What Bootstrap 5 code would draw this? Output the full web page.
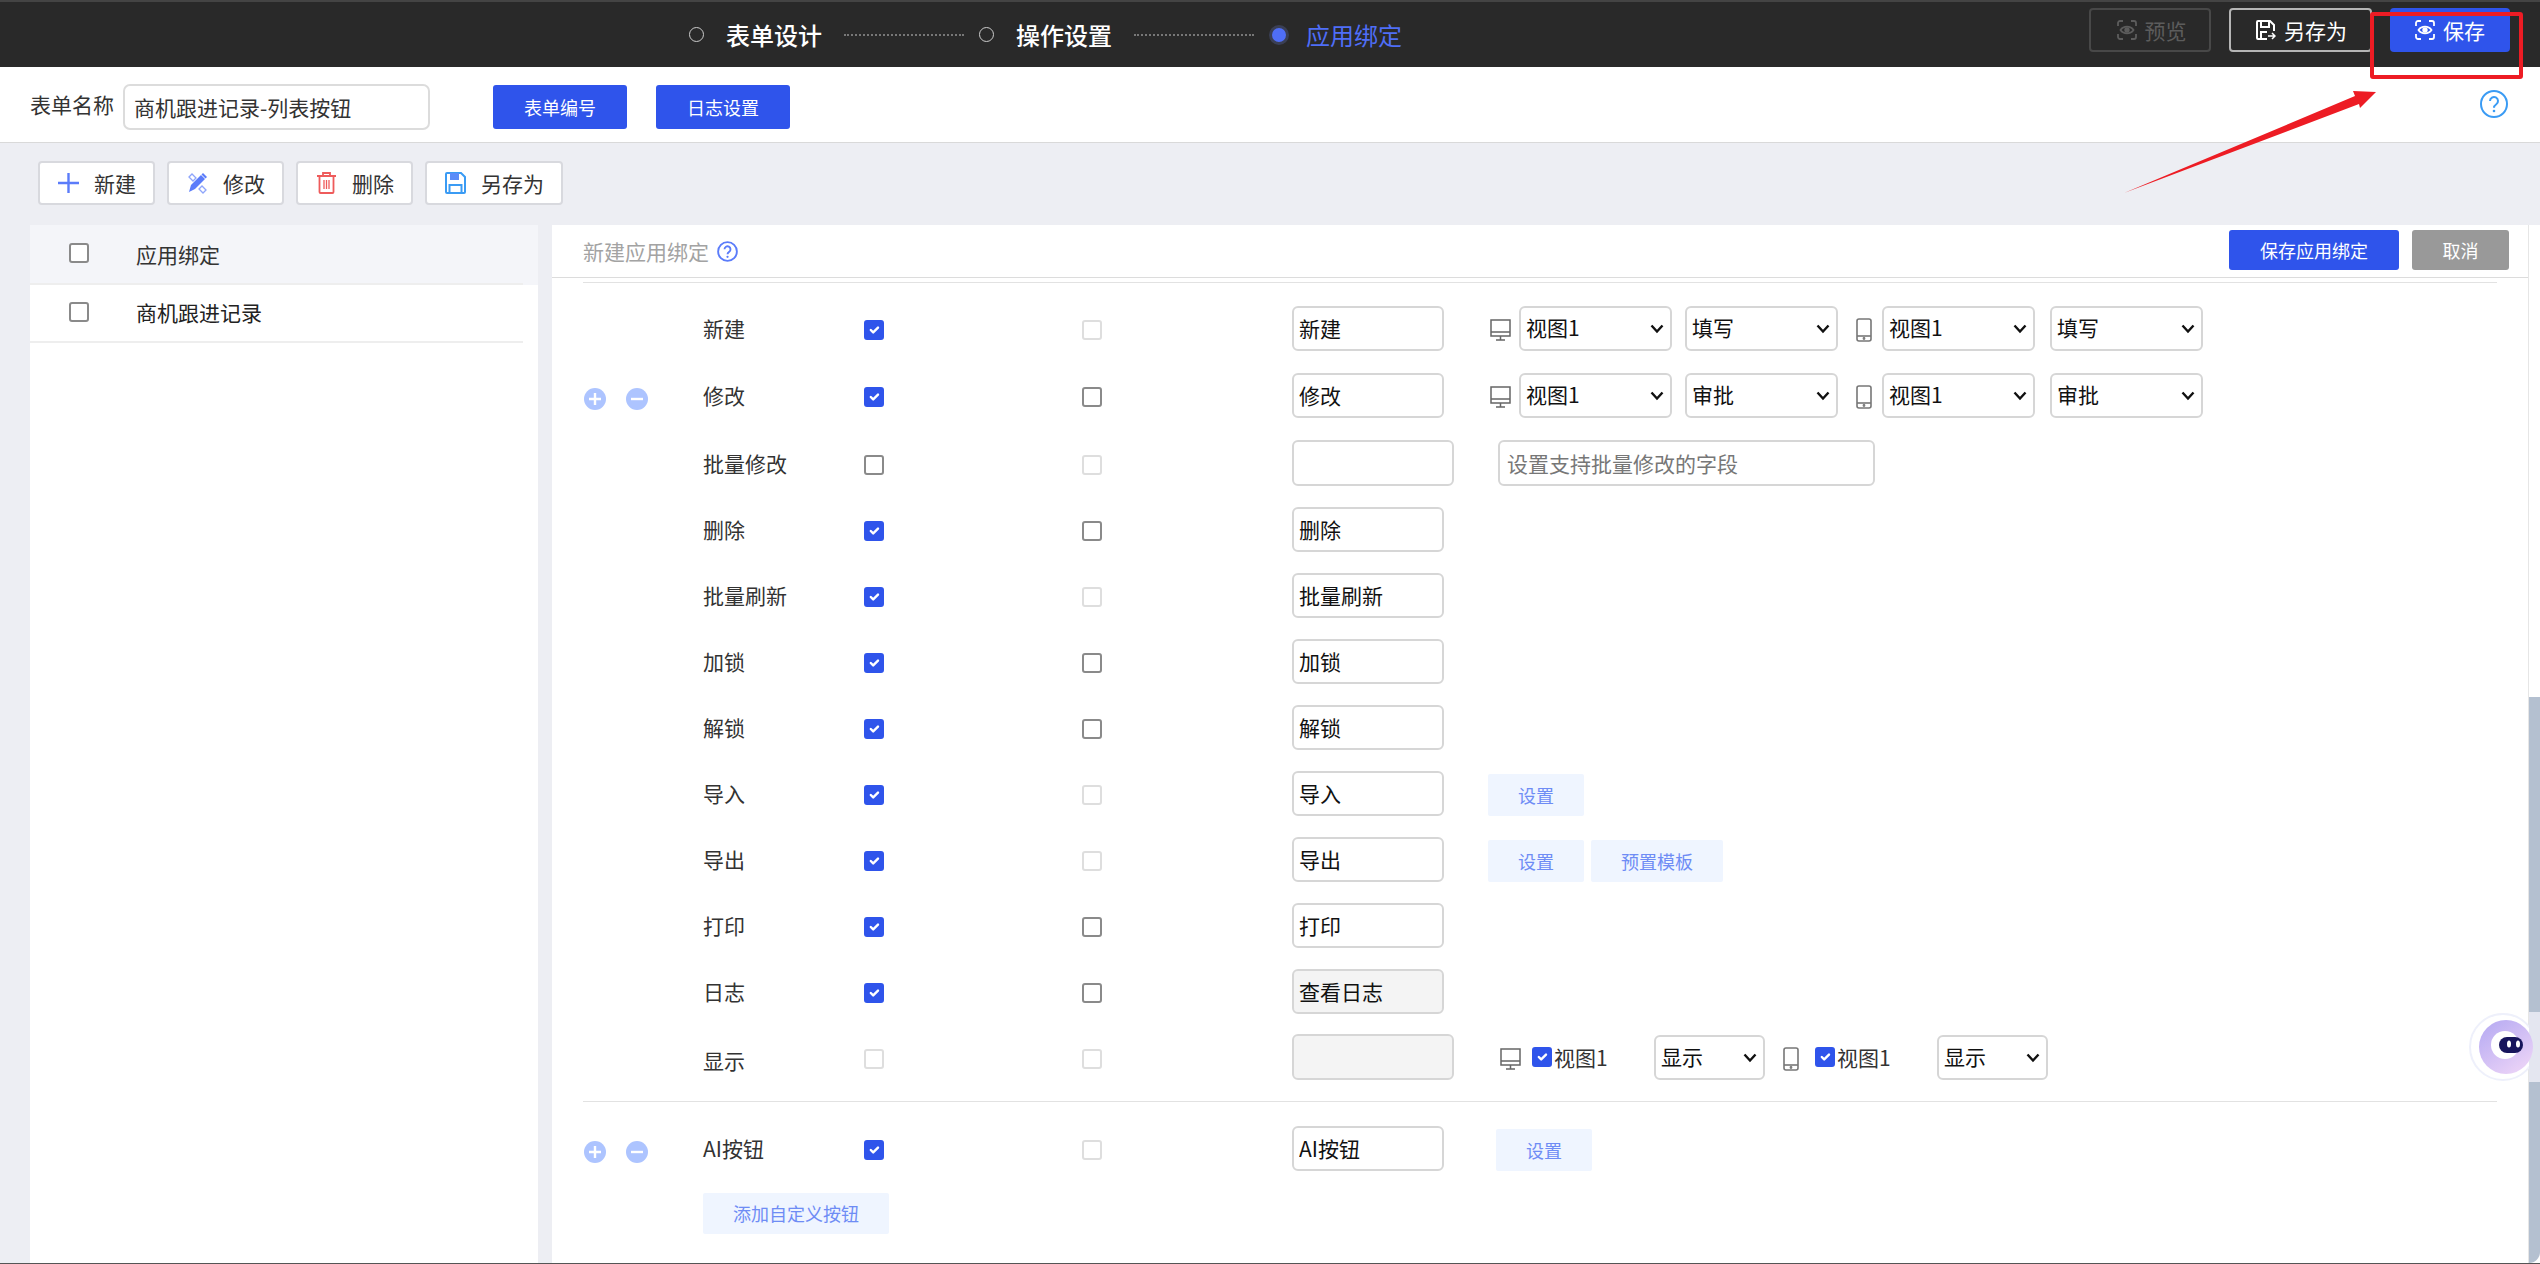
<!DOCTYPE html>
<html lang="zh-CN">

<head>
  <meta charset="utf-8">
  <title>应用绑定</title>
  <link href="https://cdn.jsdelivr.net/npm/bootstrap@5.3.0/dist/css/bootstrap.min.css" rel="stylesheet">

  <style>
    body {
      font-family: "Noto Sans CJK SC", "Noto Sans", sans-serif;
      font-size: 21px;
      color: #333;
      height: 1264px;
      overflow: hidden;
      background-color: #edeef3;
      position: relative;
    }

    /* top dark bar */
    .top-bar {
      height: 67px;
      background-color: #292929;
      border-top: 2px solid #444;
      padding-left: 689px;
      padding-right: 30px;
    }

    .step-ring {
      width: 15px;
      height: 15px;
      border: 1.5px solid #ccc;
      border-radius: 50%;
    }

    .step-now {
      width: 20px;
      height: 20px;
      background-color: #4f6ef7;
      border: 3px solid #3a3f55;
      border-radius: 50%;
    }

    .step-text {
      font-size: 24px;
      font-weight: 500;
      color: #fff;
      margin-left: 22px;
      line-height: 1;
    }

    .step-text.on {
      color: #4f6ef7;
      margin-left: 17px;
      font-weight: 400;
    }

    .step-dots {
      width: 120px;
      margin: 0 15px 0 22px;
      border-top: 2px dotted #777;
    }

    .dark-btn {
      height: 44px;
      font-size: 21px;
      padding: 0;
      border-radius: 4px;
      gap: 8px;
      margin-top: -9px;
      line-height: 1;
    }

    .dark-preview {
      width: 122px;
      color: #5c5c5c;
      border: 2px solid #484848;
      margin-right: 18px;
      padding-left: 3px;
    }

    .dark-saveas {
      width: 143px;
      color: #fff;
      border: 2px solid #b5b5b5;
      margin-right: 18px;
      padding-left: 2px;
    }

    .dark-save {
      width: 120px;
      color: #fff;
      background-color: #2f54eb;
      border: 0;
    }

    /* form name bar */
    .name-bar {
      height: 76px;
      background-color: #fff;
      border-bottom: 1px solid #d9d9d9;
      padding: 5px 32px 0 30px;
    }

    .name-label {
      width: 93px;
      margin-top: -5px;
      line-height: 1;
    }

    .name-input.form-control {
      width: 307px;
      height: 46px;
      padding: 0 9px;
      font-size: 21px;
      color: #333;
      border: 2px solid #dcdcdc;
      border-radius: 7px;
    }

    .name-help {
      margin-top: -6px;
    }

    .blue-btn {
      height: 44px;
      width: 134px;
      padding: 0;
      font-size: 18px;
      color: #fff;
      background-color: #2f54eb;
      border: 0;
      border-radius: 3px;
    }

    .gap-left-63 { margin-left: 63px; }
    .gap-left-29 { margin-left: 29px; }
    .gap-left-44 { margin-left: 44px; }
    .gap-left-52 { margin-left: 52px; }

    /* toolbar */
    .tool-bar {
      height: 82px;
      padding: 18px 0 0 38px;
      gap: 12px;
    }

    .tool-btn {
      height: 44px;
      padding: 0 17px 0 18px;
      gap: 15px;
      font-size: 21px;
      color: #333;
      background-color: #fff;
      border: 2px solid #d8d9de;
      border-radius: 4px;
      line-height: 1;
    }

    .tool-icon {
      width: 21px;
      height: 22px;
      flex: none;
    }

    /* main area */
    .main-area {
      height: 1039px;
      padding-left: 30px;
      border-bottom: 1px solid #555;
    }

    .left-panel {
      width: 508px;
      background-color: #fff;
      margin-right: 14px;
    }

    .left-head {
      height: 60px;
      background-color: #f4f5f9;
      padding-left: 39px;
    }

    .left-row {
      height: 60px;
      margin-right: 15px;
      border-top: 2px solid #eee;
      border-bottom: 2px solid #eee;
      padding-left: 39px;
      margin-top: -2px;
      position: relative;
      color: #222;
    }

    .left-text {
      margin-left: 47px;
      margin-top: -1px;
      line-height: 1;
    }

    .right-panel {
      width: 1976px;
      background-color: #fff;
    }

    .right-head {
      height: 53px;
      border-bottom: 1px solid #dcdcdc;
      padding-left: 31px;
      padding-right: 19px;
    }

    .right-title {
      color: #a3a3a3;
      line-height: 1;
    }

    .bind-save {
      width: 170px;
      height: 40px;
      margin-right: 13px;
      margin-top: -2px;
    }

    .bind-cancel {
      width: 97px;
      height: 40px;
      margin-top: -2px;
      padding: 0;
      font-size: 18px;
      color: #fff;
      background-color: #999;
      border: 0;
      border-radius: 3px;
    }

    .thin-rule {
      height: 1px;
      margin: 4px 31px 12px;
      background-color: #e2e2e2;
    }

    /* rows of the binding form */
    .bind-line {
      height: 66px;
    }

    .line-second {
      margin-top: 1px;
    }

    .line-third {
      margin-top: 2px;
    }

    .cell-handle {
      width: 151px;
      padding-left: 32px;
      gap: 20px;
      margin-top: 7px;
    }

    .cell-name {
      width: 161px;
      line-height: 1;
    }

    .cell-name.low {
      padding-top: 7px;
    }

    .cell-check {
      width: 218px;
    }

    .cell-check.two {
      width: 210px;
    }

    .round-icon {
      width: 22px;
      height: 22px;
      flex: none;
    }

    .form-check-input.list-check {
      width: 20px;
      height: 20px;
      margin: 0;
      flex: none;
      border: 2px solid #8a8a8a;
      border-radius: 3px;
      box-shadow: none;
    }

    .form-check-input.list-check:checked {
      background-color: #2f54eb;
      border-color: #2f54eb;
    }

    .form-check-input.list-check:disabled {
      opacity: 1;
      background-color: #fff;
      border-color: #dedede;
    }

    .left-head .form-check-input.list-check {
      margin-top: -4px;
    }

    .left-row .form-check-input.list-check {
      margin-top: -3px;
    }

    .cell-check .form-check-input.list-check {
      margin-top: 3px;
    }

    .form-check-input.list-check.after-screen {
      margin-left: 11px;
    }

    .form-check-input.list-check.after-phone {
      margin-left: 16px;
    }

    .text-field.form-control {
      width: 152px;
      height: 45px;
      padding: 0 5px;
      font-size: 21px;
      color: #111;
      border: 2px solid #d6d6d6;
      border-radius: 6px;
      flex: none;
    }

    .text-field.wide {
      width: 162px;
      height: 46px;
    }

    .text-field.grey {
      background-color: #f4f4f4;
    }

    .field-batch.form-control {
      width: 377px;
      height: 46px;
      margin-left: 44px;
      padding: 0 7px;
      font-size: 21px;
      border: 2px solid #d6d6d6;
      border-radius: 6px;
    }

    .field-batch.form-control::placeholder {
      color: #777;
    }

    .view-select.form-select {
      width: 153px;
      height: 45px;
      flex: none;
      padding: 0 24px 0 5px;
      font-size: 21px;
      color: #111;
      border: 2px solid #d6d6d6;
      border-radius: 6px;
      background-image: url("data:image/svg+xml,%3csvg xmlns='http://www.w3.org/2000/svg' viewBox='0 0 14 10'%3e%3cpath fill='none' stroke='%23111' stroke-width='2.4' d='M1.500 1.500L7 7.500l5.500-6'/%3e%3c/svg%3e");
      background-position: right 6px top 16px;
      background-size: 14px 10px;
      box-shadow: none;
    }

    .view-select.short {
      width: 111px;
    }

    .ms-8 { margin-left: 8px; }
    .ms-10 { margin-left: 10px; }
    .ms-13 { margin-left: 13px; }
    .ms-15 { margin-left: 15px; }
    .ms-18 { margin-left: 18px; }

    .screen-icon {
      width: 21px;
      height: 22px;
      flex: none;
      margin-left: 46px;
      margin-top: 3px;
    }

    .phone-icon {
      width: 16px;
      height: 24px;
      flex: none;
      margin-top: 3px;
    }

    .view-name {
      width: 100px;
      margin-left: 2px;
      font-size: 21px;
      line-height: 1;
    }

    .pale-btn {
      height: 42px;
      width: 96px;
      padding: 0;
      font-size: 18px;
      color: #6e8cf5;
      background-color: #eff5ff;
      border: 0;
      border-radius: 2px;
      margin-top: 4px;
      flex: none;
    }

    .pale-btn.tpl {
      width: 132px;
      margin-left: 7px;
    }

    .pale-btn.add {
      width: 186px;
      height: 41px;
      margin: 12px 0 0 151px;
    }

    .form-rule {
      height: 1px;
      margin: 11px 31px 13px;
      background-color: #e2e2e2;
    }

    .scroll-rail {
      width: 12px;
      background-color: #fff;
      border-left: 1px solid #e6e6e6;
      padding-top: 472px;
    }

    .scroll-thumb {
      height: 100%;
      background-color: #b4c0d0;
      border-bottom-right-radius: 12px;
    }

    /* hand drawn marks on the screenshot */
    .mark-layer {
      position: absolute;
      left: 0;
      top: 0;
      pointer-events: none;
    }
  </style>
</head>

<body>
  <header class="top-bar d-flex align-items-center">
    <span class="step-ring"></span>
    <span class="step-text">表单设计</span>
    <span class="step-dots"></span>
    <span class="step-ring"></span>
    <span class="step-text">操作设置</span>
    <span class="step-dots"></span>
    <span class="step-now"></span>
    <span class="step-text on">应用绑定</span>

    <button class="btn dark-btn dark-preview d-inline-flex align-items-center justify-content-center ms-auto" type="button">
      <svg width="20" height="20" viewBox="0 0 20 20" fill="none" stroke="#5c5c5c" stroke-width="1.8"><path d="M1 6V3a2 2 0 0 1 2-2h3M14 1h3a2 2 0 0 1 2 2v3M19 14v3a2 2 0 0 1-2 2h-3M6 19H3a2 2 0 0 1-2-2v-3"/><path d="M3.5 10c3-4.500 10-4.500 13 0-3 4.500-10 4.500-13 0z"/><circle cx="10" cy="10" r="1.800" fill="#5c5c5c"/></svg>
      预览
    </button>
    <button class="btn dark-btn dark-saveas d-inline-flex align-items-center justify-content-center" type="button">
      <svg width="20" height="20" viewBox="0 0 20 20" fill="none" stroke="#fff" stroke-width="2"><path d="M11 19H2a1 1 0 0 1-1-1V2a1 1 0 0 1 1-1h12l4 4v6"/><path d="M5 1v6h8V1M5 19v-7h6"/><path d="M12 16h7M16 13l3 3-3 3" stroke-width="1.500"/></svg>
      另存为
    </button>
    <button class="btn dark-btn dark-save d-inline-flex align-items-center justify-content-center" type="button">
      <svg width="20" height="20" viewBox="0 0 20 20" fill="none" stroke="#fff" stroke-width="1.800"><path d="M1 6V3a2 2 0 0 1 2-2h3M14 1h3a2 2 0 0 1 2 2v3M19 14v3a2 2 0 0 1-2 2h-3M6 19H3a2 2 0 0 1-2-2v-3"/><path d="M3.500 10c3-4.500 10-4.500 13 0-3 4.500-10 4.500-13 0z"/><circle cx="10" cy="10" r="1.800" fill="#fff"/></svg>
      保存
    </button>
  </header>

  <div class="name-bar d-flex align-items-center">
    <span class="name-label">表单名称</span>
    <input class="form-control name-input" type="text" value="商机跟进记录-列表按钮">
    <button class="btn blue-btn gap-left-63" type="button">表单编号</button>
    <button class="btn blue-btn gap-left-29" type="button">日志设置</button>
    <svg class="name-help ms-auto" width="28" height="28" viewBox="0 0 28 28" fill="none">
      <circle cx="14" cy="14" r="13" stroke="#3a9bf4" stroke-width="2"/>
      <path d="M10 11a4 4 0 1 1 6.300 3.300c-1.400 1-2.300 1.700-2.300 3.400" stroke="#3a9bf4" stroke-width="2"/>
      <circle cx="14" cy="21" r="1.300" fill="#3a9bf4"/>
    </svg>
  </div>

  <div class="tool-bar d-flex align-items-start">
    <button class="btn tool-btn d-inline-flex align-items-center" type="button">
      <svg class="tool-icon" viewBox="0 0 21 22"><path d="M10.500 1v20M0 11h21" stroke="#5b7cfa" stroke-width="2.400"/></svg>
      新建
    </button>
    <button class="btn tool-btn d-inline-flex align-items-center" type="button">
      <svg class="tool-icon" viewBox="0 0 21 22" fill="none">
        <path d="M2 20l2-7L14 3l4 4L8 17z" fill="#5b7cfa"/>
        <path d="M16 1l4 4-1.500 1.500-4-4z" fill="#5b7cfa"/>
        <path d="M2 5l3-3 4 4-3 3zM12 17l3-3 4 4-3 3z" stroke="#8ea5fb" stroke-width="1.300"/>
      </svg>
      修改
    </button>
    <button class="btn tool-btn d-inline-flex align-items-center" type="button">
      <svg class="tool-icon" viewBox="0 0 21 22" fill="none" stroke="#ee5b5b" stroke-width="1.800">
        <path d="M1 4h19M7 4V1h7v3"/>
        <path d="M3.500 4v16a1 1 0 0 0 1 1h12a1 1 0 0 0 1-1V4"/>
        <path d="M8 8v9M10.500 8v9M13 8v9" stroke-width="1.300"/>
      </svg>
      删除
    </button>
    <button class="btn tool-btn d-inline-flex align-items-center" type="button">
      <svg class="tool-icon" viewBox="0 0 21 22" fill="none" stroke="#3a9bf4" stroke-width="2">
        <path d="M2 1h14l4 4v15a1 1 0 0 1-1 1H2a1 1 0 0 1-1-1V2a1 1 0 0 1 1-1z"/>
        <path d="M5 1h9v7H5z" fill="#5b8cf8" stroke="none"/>
        <path d="M4.500 21v-8h12v8"/>
      </svg>
      另存为
    </button>
  </div>

  <div class="main-area d-flex">
    <aside class="left-panel">
      <div class="left-head d-flex align-items-center">
        <input class="form-check-input list-check" type="checkbox">
        <span class="left-text">应用绑定</span>
      </div>
      <div class="left-row d-flex align-items-center">
        <input class="form-check-input list-check" type="checkbox">
        <span class="left-text">商机跟进记录</span>
      </div>
    </aside>

    <section class="right-panel">
      <div class="right-head d-flex align-items-center">
        <span class="right-title">新建应用绑定</span>
        <svg class="ms-2" width="21" height="21" viewBox="0 0 28 28" fill="none">
          <circle cx="14" cy="14" r="12.500" stroke="#5b7cfa" stroke-width="2.500"/>
          <path d="M10 11a4 4 0 1 1 6.300 3.300c-1.400 1-2.300 1.700-2.300 3.400" stroke="#5b7cfa" stroke-width="2.500"/>
          <circle cx="14" cy="21" r="1.500" fill="#5b7cfa"/>
        </svg>
        <button class="btn blue-btn bind-save ms-auto" type="button">保存应用绑定</button>
        <button class="btn bind-cancel" type="button">取消</button>
      </div>
      <div class="thin-rule"></div>

      <div class="bind-line d-flex align-items-center">
        <div class="cell-handle"></div>
        <div class="cell-name">新建</div>
        <div class="cell-check d-flex"><input class="form-check-input list-check" type="checkbox" checked></div>
        <div class="cell-check two d-flex"><input class="form-check-input list-check" type="checkbox" disabled></div>
        <input class="form-control text-field" type="text" value="新建">
        <svg class="screen-icon" viewBox="0 0 21 22" fill="none" stroke="#666" stroke-width="1.500"><path d="M1 1h19v16H1zM1 13h19M10.500 17v4M6 21h9"/></svg>
        <select class="form-select view-select ms-8"><option>视图1</option></select>
        <select class="form-select view-select ms-13"><option>填写</option></select>
        <svg class="phone-icon ms-18" viewBox="0 0 16 24" fill="none" stroke="#777" stroke-width="1.600"><rect x="1" y="1" width="14" height="22" rx="2"/><path d="M1 18h14"/><circle cx="8" cy="20.500" r=".6"/></svg>
        <select class="form-select view-select ms-10"><option>视图1</option></select>
        <select class="form-select view-select ms-15"><option>填写</option></select>
      </div>

      <div class="bind-line line-second d-flex align-items-center">
        <div class="cell-handle d-flex">
          <svg class="round-icon" viewBox="0 0 22 22"><circle cx="11" cy="11" r="11" fill="#adc4ff"/><path d="M11 5v12M5 11h12" stroke="#fff" stroke-width="2.400"/></svg>
          <svg class="round-icon" viewBox="0 0 22 22"><circle cx="11" cy="11" r="11" fill="#adc4ff"/><path d="M5 11h12" stroke="#fff" stroke-width="2.400"/></svg>
        </div>
        <div class="cell-name">修改</div>
        <div class="cell-check d-flex"><input class="form-check-input list-check" type="checkbox" checked></div>
        <div class="cell-check two d-flex"><input class="form-check-input list-check" type="checkbox"></div>
        <input class="form-control text-field" type="text" value="修改">
        <svg class="screen-icon" viewBox="0 0 21 22" fill="none" stroke="#666" stroke-width="1.500"><path d="M1 1h19v16H1zM1 13h19M10.500 17v4M6 21h9"/></svg>
        <select class="form-select view-select ms-8"><option>视图1</option></select>
        <select class="form-select view-select ms-13"><option>审批</option></select>
        <svg class="phone-icon ms-18" viewBox="0 0 16 24" fill="none" stroke="#777" stroke-width="1.600"><rect x="1" y="1" width="14" height="22" rx="2"/><path d="M1 18h14"/><circle cx="8" cy="20.500" r=".6"/></svg>
        <select class="form-select view-select ms-10"><option>视图1</option></select>
        <select class="form-select view-select ms-15"><option>审批</option></select>
      </div>

      <div class="bind-line line-third d-flex align-items-center">
        <div class="cell-handle"></div>
        <div class="cell-name">批量修改</div>
        <div class="cell-check d-flex"><input class="form-check-input list-check" type="checkbox"></div>
        <div class="cell-check two d-flex"><input class="form-check-input list-check" type="checkbox" disabled></div>
        <input class="form-control text-field wide" type="text">
        <input class="form-control field-batch" type="text" placeholder="设置支持批量修改的字段">
      </div>

      <div class="bind-line d-flex align-items-center">
        <div class="cell-handle"></div>
        <div class="cell-name">删除</div>
        <div class="cell-check d-flex"><input class="form-check-input list-check" type="checkbox" checked></div>
        <div class="cell-check two d-flex"><input class="form-check-input list-check" type="checkbox"></div>
        <input class="form-control text-field" type="text" value="删除">
      </div>

      <div class="bind-line d-flex align-items-center">
        <div class="cell-handle"></div>
        <div class="cell-name">批量刷新</div>
        <div class="cell-check d-flex"><input class="form-check-input list-check" type="checkbox" checked></div>
        <div class="cell-check two d-flex"><input class="form-check-input list-check" type="checkbox" disabled></div>
        <input class="form-control text-field" type="text" value="批量刷新">
      </div>

      <div class="bind-line d-flex align-items-center">
        <div class="cell-handle"></div>
        <div class="cell-name">加锁</div>
        <div class="cell-check d-flex"><input class="form-check-input list-check" type="checkbox" checked></div>
        <div class="cell-check two d-flex"><input class="form-check-input list-check" type="checkbox"></div>
        <input class="form-control text-field" type="text" value="加锁">
      </div>

      <div class="bind-line d-flex align-items-center">
        <div class="cell-handle"></div>
        <div class="cell-name">解锁</div>
        <div class="cell-check d-flex"><input class="form-check-input list-check" type="checkbox" checked></div>
        <div class="cell-check two d-flex"><input class="form-check-input list-check" type="checkbox"></div>
        <input class="form-control text-field" type="text" value="解锁">
      </div>

      <div class="bind-line d-flex align-items-center">
        <div class="cell-handle"></div>
        <div class="cell-name">导入</div>
        <div class="cell-check d-flex"><input class="form-check-input list-check" type="checkbox" checked></div>
        <div class="cell-check two d-flex"><input class="form-check-input list-check" type="checkbox" disabled></div>
        <input class="form-control text-field" type="text" value="导入">
        <button class="btn pale-btn gap-left-44" type="button">设置</button>
      </div>

      <div class="bind-line d-flex align-items-center">
        <div class="cell-handle"></div>
        <div class="cell-name">导出</div>
        <div class="cell-check d-flex"><input class="form-check-input list-check" type="checkbox" checked></div>
        <div class="cell-check two d-flex"><input class="form-check-input list-check" type="checkbox" disabled></div>
        <input class="form-control text-field" type="text" value="导出">
        <button class="btn pale-btn gap-left-44" type="button">设置</button>
        <button class="btn pale-btn tpl" type="button">预置模板</button>
      </div>

      <div class="bind-line d-flex align-items-center">
        <div class="cell-handle"></div>
        <div class="cell-name">打印</div>
        <div class="cell-check d-flex"><input class="form-check-input list-check" type="checkbox" checked></div>
        <div class="cell-check two d-flex"><input class="form-check-input list-check" type="checkbox"></div>
        <input class="form-control text-field" type="text" value="打印">
      </div>

      <div class="bind-line d-flex align-items-center">
        <div class="cell-handle"></div>
        <div class="cell-name">日志</div>
        <div class="cell-check d-flex"><input class="form-check-input list-check" type="checkbox" checked></div>
        <div class="cell-check two d-flex"><input class="form-check-input list-check" type="checkbox"></div>
        <input class="form-control text-field grey" type="text" value="查看日志">
      </div>

      <div class="bind-line d-flex align-items-center">
        <div class="cell-handle"></div>
        <div class="cell-name low">显示</div>
        <div class="cell-check d-flex"><input class="form-check-input list-check" type="checkbox" disabled></div>
        <div class="cell-check two d-flex"><input class="form-check-input list-check" type="checkbox" disabled></div>
        <input class="form-control text-field wide grey" type="text">
        <svg class="screen-icon" viewBox="0 0 21 22" fill="none" stroke="#666" stroke-width="1.500"><path d="M1 1h19v16H1zM1 13h19M10.500 17v4M6 21h9"/></svg>
        <input class="form-check-input list-check after-screen" type="checkbox" checked>
        <span class="view-name">视图1</span>
        <select class="form-select view-select short"><option>显示</option></select>
        <svg class="phone-icon ms-18" viewBox="0 0 16 24" fill="none" stroke="#777" stroke-width="1.600"><rect x="1" y="1" width="14" height="22" rx="2"/><path d="M1 18h14"/><circle cx="8" cy="20.500" r=".6"/></svg>
        <input class="form-check-input list-check after-phone" type="checkbox" checked>
        <span class="view-name">视图1</span>
        <select class="form-select view-select short"><option>显示</option></select>
      </div>

      <div class="form-rule"></div>

      <div class="bind-line d-flex align-items-center">
        <div class="cell-handle d-flex">
          <svg class="round-icon" viewBox="0 0 22 22"><circle cx="11" cy="11" r="11" fill="#adc4ff"/><path d="M11 5v12M5 11h12" stroke="#fff" stroke-width="2.400"/></svg>
          <svg class="round-icon" viewBox="0 0 22 22"><circle cx="11" cy="11" r="11" fill="#adc4ff"/><path d="M5 11h12" stroke="#fff" stroke-width="2.400"/></svg>
        </div>
        <div class="cell-name">AI按钮</div>
        <div class="cell-check d-flex"><input class="form-check-input list-check" type="checkbox" checked></div>
        <div class="cell-check two d-flex"><input class="form-check-input list-check" type="checkbox" disabled></div>
        <input class="form-control text-field" type="text" value="AI按钮">
        <button class="btn pale-btn gap-left-52" type="button">设置</button>
      </div>

      <button class="btn pale-btn add" type="button">添加自定义按钮</button>
    </section>

    <div class="scroll-rail">
      <div class="scroll-thumb"></div>
    </div>
  </div>

  <!-- red annotation over the screenshot, and the floating assistant -->
  <svg class="mark-layer" width="2540" height="1264" viewBox="0 0 2540 1264" fill="none">
    <defs>
      <linearGradient id="botDisc" x1="0" y1="0" x2="0.700" y2="1">
        <stop offset="0" stop-color="#b3a8f2"/>
        <stop offset="1" stop-color="#ead2f7"/>
      </linearGradient>
    </defs>
    <rect x="2372" y="14" width="149" height="63" rx="1" stroke="#ed1c24" stroke-width="4"/>
    <polygon points="2124,193 2355,96 2353,91 2376,92 2360,108 2359,104" fill="#ed1c24"/>
    <circle cx="2503" cy="1047" r="33" fill="#fff" stroke="#eef0fb" stroke-width="2"/>
    <rect x="2529" y="1012" width="11" height="70" fill="#e4e6f0"/>
    <circle cx="2506" cy="1047" r="27" fill="url(#botDisc)"/>
    <circle cx="2505" cy="1045" r="14" fill="#fff"/>
    <rect x="2499" y="1037" width="24" height="16" rx="8" fill="#17155c"/>
    <ellipse cx="2509" cy="1044" rx="2" ry="3.500" fill="#fff"/>
    <ellipse cx="2518" cy="1044" rx="2" ry="3.500" fill="#fff"/>
  </svg>

  <script src="https://cdn.jsdelivr.net/npm/bootstrap@5.3.0/dist/js/bootstrap.bundle.min.js"></script>
</body>

</html>
